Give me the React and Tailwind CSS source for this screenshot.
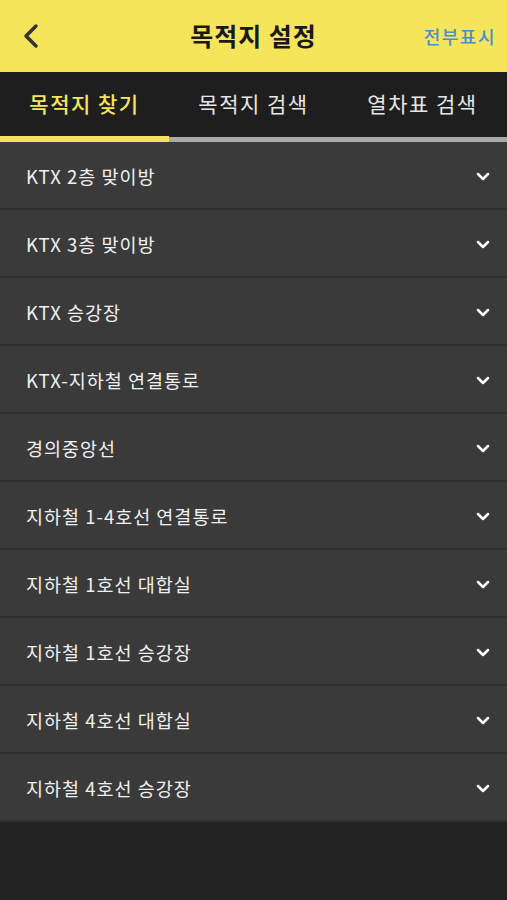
const rows = [
  'KTX 2층 맞이방',
  'KTX 3층 맞이방',
  'KTX 승강장',
  'KTX-지하철 연결통로',
  '경의중앙선',
  '지하철 1-4호선 연결통로',
  '지하철 1호선 대합실',
  '지하철 1호선 승강장',
  '지하철 4호선 대합실',
  '지하철 4호선 승강장',
];

const tabs = ['목적지 찾기', '목적지 검색', '열차표 검색'];

const font = { fontFamily: '"Noto Sans CJK KR", "Noto Sans", sans-serif' };

export default function App() {
  return (
    <div className="w-[507px] h-[900px] bg-[#232323] flex flex-col" style={font}>
      {/* Header */}
      <div className="h-[72px] bg-[#f5e55a] flex items-center relative shrink-0">
        <svg className="ml-[21px]" width="20" height="26" viewBox="0 0 20 26" fill="none">
          <path d="M15 3 L5 13 L15 23" stroke="#333" strokeWidth="3.5" strokeLinecap="round" strokeLinejoin="round" />
        </svg>
        <h1 className="absolute left-0 right-0 text-center text-[25px] tracking-[1px] font-bold text-[#1a1a1a] pointer-events-none">목적지 설정</h1>
        <span className="ml-auto mr-[11px] text-[18px] tracking-[1.5px] font-medium text-[#4a8fcc]">전부표시</span>
      </div>

      {/* Tabs */}
      <div className="bg-[#1e1e1e] shrink-0">
        <div className="grid grid-cols-3 h-[64px] items-center">
          {tabs.map((t, i) => (
            <div key={t} className={`text-center text-[21px] tracking-[1.5px] ${i === 0 ? 'text-[#f5e55a] font-medium' : 'text-[#e6e6e6]'}`}>{t}</div>
          ))}
        </div>
        <div className="flex h-[6px]">
          <div className="w-[169px] bg-[#f1e25a]" />
          <div className="flex-1 flex flex-col">
            <div className="h-[1px] bg-[#1e1e1e]" />
            <div className="flex-1 bg-[#a9a9a9]" />
          </div>
        </div>
      </div>

      {/* List */}
      <div className="flex flex-col">
        {rows.map((r) => (
          <div key={r} className="h-[68px] bg-[#3a3a3a] border-b-2 border-[#2f2f2f] flex items-center pl-[26px] pr-[17px] pt-[3px]">
            <span className="text-[18.5px] tracking-[1px] text-[#f0f0f0]">{r}</span>
            <svg className="ml-auto" width="14" height="10" viewBox="0 0 14 10" fill="none">
              <path d="M2 2 L7 7 L12 2" stroke="#fff" strokeWidth="2.5" strokeLinecap="round" strokeLinejoin="round" />
            </svg>
          </div>
        ))}
      </div>
    </div>
  );
}
